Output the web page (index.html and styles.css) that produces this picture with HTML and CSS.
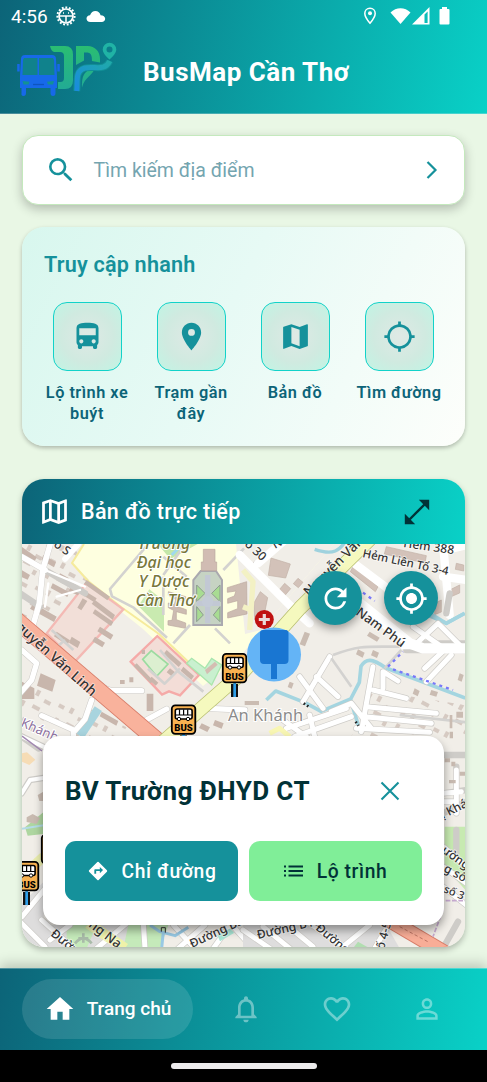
FILE: index.html
```html
<!DOCTYPE html>
<html lang="vi">
<head>
<meta charset="utf-8">
<meta name="viewport" content="width=device-width, initial-scale=1">
<title>BusMap Cần Thơ</title>
<link rel="stylesheet" href="styles.css">
</head>
<body>
<header class="top">
  <div class="status">
    <span class="clock">4:56</span>
    <svg class="st-gear" width="20" height="20" viewBox="0 0 20 20" fill="none" stroke="#fff"><circle cx="10" cy="10" r="8.600" stroke-width="2" stroke-dasharray="1.9 1.7"/><circle cx="10" cy="10" r="7" stroke-width="1.7"/><path d="M3.500 10h13M10 10v6" stroke-width="1.5"/><path d="M7 7h1M12 7h1" stroke-width="1.3"/></svg>
    <svg class="st-cloud" width="20" height="13" viewBox="0 0 20 13" fill="#fff"><path d="M4.500 12C1.900 12 .5 10.400.5 8.500S2 5.300 4 5.200C5 2.500 7 1 9.300 1c2.800 0 4.700 1.800 5.300 4.200 2.700 0 4.600 1.500 4.600 3.600 0 1.900-1.500 3.200-3.500 3.200z"/></svg>
    <span class="grow"></span>
    <svg class="st-pin" width="14" height="18" viewBox="0 0 14 18"><path d="M7 1.200c-3 0-5.200 2.200-5.200 5.200C1.800 10 7 16.200 7 16.200s5.200-6.200 5.200-9.800c0-3-2.200-5.200-5.200-5.200z" fill="none" stroke="#fff" stroke-width="1.5"/><circle cx="7" cy="6.300" r="2" fill="#fff"/></svg>
    <svg class="st-wifi" width="21" height="18" viewBox="0 0 21 18" fill="#fff"><path d="M.5 5.500C6-.2 15-.2 20.500 5.500L10.500 17z"/></svg>
    <svg class="st-cell" width="18" height="18" viewBox="0 0 18 18"><path d="M0 17.500 17.500 0v17.500z" fill="#fff"/><path d="M12.500 7.500 15.600 4.500v11.500h-3.100z" fill="#0abdb9"/></svg>
    <svg class="st-bat" width="11" height="18" viewBox="0 0 11 18" fill="#fff"><path d="M3 0h5v2h1.500q1 0 1 1v13.500q0 1-1 1h-8q-1 0-1-1V3q0-1 1-1H3z"/></svg>
  </div>
  <div class="brand">
    <svg class="logo" width="102" height="56" viewBox="0 0 102 56">
      <defs><linearGradient id="lg" x1="0" y1="0" x2="0" y2="1"><stop offset="0" stop-color="#2abd72"/><stop offset="1" stop-color="#22ab94"/></linearGradient>
      <linearGradient id="lb" x1="0" y1="1" x2="1" y2="0"><stop offset="0" stop-color="#198bdd"/><stop offset="1" stop-color="#20aaa9"/></linearGradient></defs>
      <path d="M33 4h15q8 0 8 8.500v26q0 8.500-8 8.500h-7v-7h2.500q3.500 0 3.500-4V14q0-4-4-4H37q-3-1-4-6z" fill="url(#lg)"/>
      <path d="M59 4h11.500C78 4 83 9.500 83 17v3.500l-8-1.500c0-6-1-8.500-6-8.500h-2v8l-8 4.500zM65 45.500c0-11 1-16.500 13-20-2 8-10 9-13 20z" fill="url(#lg)"/>
      <path d="M59.800 49c1-10-2-20 8-23 9-2.500 20 4 25-7" fill="none" stroke="#118f96" stroke-width="7"/>
      <path d="M59.800 49c1-10-2-20 8-23 9-2.500 20 4 25-7" fill="none" stroke="url(#lb)" stroke-width="5"/>
      <path fill-rule="evenodd" d="M92.500 .8a6.800 6.800 0 0 0-6.800 6.800c0 4.500 6.800 10 6.800 10s6.800-5.500 6.800-10A6.800 6.800 0 0 0 92.500 .8zm0 3.800a3 3 0 1 1 0 6 3 3 0 0 1 0-6z" fill="#20b3a5"/>
      <g fill="#1769e9"><path d="M8 13h27q4 0 4 4l1 17v12h-1.500v5q0 3-2.500 3t-2.500-3v-5H9v5q0 3-2.500 3T4.500 51v-5H3V34l1-17q0-4 4-4z"/><path d="M.2 22h2.500v7.500H.2zM40.300 22h2.500v7.500h-2.500z"/></g>
      <path d="M7 16h13.500v17H5.500l.5-15zM22 16h14l1 2 .5 15H22z" fill="#10828c"/>
      <path d="M5.500 39l7 .8-1 2.700H6.500zM37 39l-7 .8 1 2.700h5z" fill="#139193"/><path d="M16 42.500h11" stroke="#0e55bf" stroke-width="1.300"/>
    </svg>
    <h1>BusMap Cần Thơ</h1>
  </div>
</header>

<main>
  <div class="search">
    <svg class="s-icon" width="32" height="32" viewBox="0 0 24 24" fill="#15919b"><path d="M15.500 14h-.79l-.28-.27A6.470 6.470 0 0 0 16 9.500 6.500 6.500 0 1 0 9.500 16c1.610 0 3.090-.59 4.230-1.570l.27.28v.79l5 4.990L20.490 19zm-6 0C7.010 14 5 11.990 5 9.500S7.010 5 9.500 5 14 7.010 14 9.500 11.990 14 9.500 14z"/></svg>
    <span class="placeholder">Tìm kiếm địa điểm</span>
    <svg width="12" height="20" viewBox="0 0 12 20" fill="none" stroke="#15919b" stroke-width="2.200"><path d="M1.500 2l8 8-8 8"/></svg>
  </div>

  <section class="quick">
    <h2>Truy cập nhanh</h2>
    <div class="tiles">
      <div class="tile"><div class="box"><svg width="33" height="33" viewBox="0 0 24 24"><path d="M4 16c0 .88.39 1.670 1 2.220V20c0 .55.45 1 1 1h1c.55 0 1-.45 1-1v-1h8v1c0 .55.45 1 1 1h1c.55 0 1-.45 1-1v-1.780c.61-.55 1-1.340 1-2.220V6c0-3.500-3.580-4-8-4s-8 .5-8 4v10zm3.500 1c-.83 0-1.500-.67-1.500-1.500S6.670 14 7.500 14s1.500.67 1.500 1.500S8.330 17 7.500 17zm9 0c-.83 0-1.500-.67-1.500-1.500s.67-1.500 1.500-1.500 1.500.67 1.500 1.500-.67 1.500-1.500 1.500zm1.500-6H6V6h12v5z"/></svg></div><span>Lộ trình xe buýt</span></div>
      <div class="tile"><div class="box"><svg width="33" height="33" viewBox="0 0 24 24"><path d="M12 2C8.130 2 5 5.130 5 9c0 5.250 7 13 7 13s7-7.750 7-13c0-3.870-3.130-7-7-7zm0 9.500a2.500 2.500 0 0 1 0-5 2.500 2.500 0 0 1 0 5z"/></svg></div><span>Trạm gần đây</span></div>
      <div class="tile"><div class="box"><svg width="33" height="33" viewBox="0 0 24 24"><path d="M20.500 3l-.16.03L15 5.100 9 3 3.360 4.900c-.21.07-.36.25-.36.48V20.500c0 .28.22.5.5.5l.16-.03L9 18.900l6 2.100 5.640-1.900c.21-.07.36-.25.36-.48V3.500c0-.28-.22-.5-.5-.5zM15 19l-6-2.110V5l6 2.110V19z"/></svg></div><span>Bản đồ</span></div>
      <div class="tile"><div class="box"><svg width="33" height="33" viewBox="0 0 24 24"><path d="M20.940 11A8.994 8.994 0 0 0 13 3.060V1h-2v2.060A8.994 8.994 0 0 0 3.060 11H1v2h2.060A8.994 8.994 0 0 0 11 20.940V23h2v-2.060A8.994 8.994 0 0 0 20.940 13H23v-2h-2.060zM12 19c-3.870 0-7-3.130-7-7s3.130-7 7-7 7 3.130 7 7-3.130 7-7 7z"/></svg></div><span>Tìm đường</span></div>
    </div>
  </section>

  <section class="live">
    <div class="live-head">
      <svg width="33" height="33" viewBox="0 0 24 24" fill="#fff"><path d="M20.500 3l-.16.03L15 5.100 9 3 3.360 4.900c-.21.07-.36.25-.36.48V20.500c0 .28.22.5.5.5l.16-.03L9 18.900l6 2.100 5.640-1.900c.21-.07.36-.25.36-.48V3.500c0-.28-.22-.5-.5-.5zM10 5.470l4 1.400v11.660l-4-1.400V5.470zm-5 .99l3-1.010v11.700l-3 1.160V6.460zm14 11.080l-3 1.010V6.860l3-1.160v11.840z"/></svg>
      <h2>Bản đồ trực tiếp</h2>
      <svg width="26" height="26" viewBox="0 0 26 26"><path d="M14.800.8h10.400v10.400zM.8 14.800v10.400h10.400z" fill="#013237"/><path d="M5 21L21 5" stroke="#013237" stroke-width="2.400"/></svg>
    </div>
    <div class="map">
      <svg class="tiles-map" width="443" height="403" viewBox="22 544 443 403">
        <defs>
          <g id="stop"><path d="M9 32h7v13H9z" fill="#111"/><path d="M11.300 30h2.700v15h-2.700z" fill="#2f9fe8"/><rect x=".8" y="1.800" width="23.500" height="28.500" rx="3.500" fill="#f8b251" stroke="#000" stroke-width="1.800"/><rect x="4.300" y="5.500" width="16.800" height="10" rx="2" fill="#fff" stroke="#000" stroke-width="1.600"/><path d="M4 11.500h17M8.500 6v5M12.600 6v5M16.700 6v5" stroke="#000" stroke-width="1.200"/><circle cx="8" cy="15.500" r="1.700" fill="#fff" stroke="#000"/><circle cx="17" cy="15.500" r="1.700" fill="#fff" stroke="#000"/><text x="12.500" y="27.600" text-anchor="middle" class="bus">BUS</text></g>
          <pattern id="houses" width="38" height="31" patternUnits="userSpaceOnUse" patternTransform="rotate(28)"><path d="M3 4h6v4H3zM15 2h4v6h-4zM26 7h7v4h-7zM6 18h4v6H6zM18 17h8v4h-8zM31 22h4v5h-4z" fill="#d6cac2"/></pattern>
        </defs>
        <path d="M22 544h443v403H22z" fill="#f1eee8"/>
        <path d="M22 544h58l-6 18 16 18-28 44-40-8zM22 680l70 30 60 30H22zM370 690l95 15v35H350z" fill="url(#houses)"/>
        <!-- campus and hospital grounds -->
        <path d="M84 544h250l-73 86-21 27-37 29-60-57-35-28-35-38z" fill="#feffe0"/>
        <path d="M236 544h98l-73 86-16 4z" fill="#f1eee8"/>
        <path d="M84 544L72 563l16 18 33 26 38 27 40 38 13 13" class="l" stroke="#f6eb9b" stroke-width="2"/>
        <g transform="translate(20 470) scale(.33333)">
          <path d="M413 222h120l-82 45z" fill="#c3e7a8"/><path d="M355 408l33-50 44 35v92z" fill="#c9eab0"/>
          <path d="M455 255l30-30" class="l" stroke="#9fd9ed" stroke-width="9"/>
          <path d="M200 338L80 490 165 575l145-157z" fill="#f2dfd8" stroke="#f4b9b4" stroke-width="7"/>
          <g fill="#c8b6ac"><path d="M190 360l40 25-7 12-40-25zM188 385l14 8-18 28-12-8zM225 390l60 45-7 14-63-48zM225 418l55 38-7 12-55-38zM200 330l70 50-8 11-70-50zM40 400l70 40-8 16-72-40zM5 230l45 32-8 16-37-24zM70 255l38 22-6 15-38-22zM5 300l25 15-7 14-18-8zM240 470l40 25-8 14-40-25zM225 500l30 18-8 14-30-18zM110 485l40 26-8 14-40-26zM155 500l26 16-8 18-26-16z"/><path d="M98 340l50 27-6 14-50-27zM120 310l26 14-6 13-26-14zM152 350l28 12-6 14-28-12z"/></g>
          <path d="M5 260l70 40M90 225l-22 75-10 100L35 480M75 300l120 70M0 370l60 40" class="c"/><path d="M5 260l70 40M90 225l-22 75-10 100L35 480M175 222l-40 45" class="w" stroke-width="17"/><path d="M75 300l120 50M85 340l-10 70M110 380l70-20" class="w" stroke-width="7"/>
          <path d="M385 222l-115 135 6 22 65 34 100 90M430 320v115M500 320l-70-60M430 315l60-85M610 300l62-65" class="c2"/>
          <path d="M520 465V330l22-27h46l18 27v135z" fill="#c6d3c3" stroke="#aaa9af" stroke-width="6"/><g fill="#a8dc92" stroke="#8e9b91" stroke-width="3"><path d="M530 345l25 25-25 25zM600 345l-25 25 25 25zM530 410l20 25-20 20zM600 410l-20 25 20 20z"/></g><path d="M563 315v145M530 400h70" stroke="#c2c8d4" stroke-width="16"/><circle cx="563" cy="395" r="17" fill="#c4cbd7"/><path d="M550 238h35v38h5v26h-46v-26h6z" fill="#d1bcb3" stroke="#bba79e" stroke-width="2"/>
          <g fill="#cdbcb2" stroke="#bba79e" stroke-width="2"><path d="M445 365l52 15v12l-23-3-5 20 30 10v14l-30-8v24l28 10v16l-53-10v-13l12-1 5-30-16-8v-14l18 5 4-16-22-11zM680 335l-58 18v14l26-4-5 15-20 8v14l30-8v24l-30 12v16l58-12z"/></g>
        </g>
        <g transform="translate(20 600) scale(.33333)">
          <path d="M332 185L412 108 537 225 480 286 447 274 426 284z" fill="#f3ddd7" stroke="#f5aaa8" stroke-width="7"/>
          <path d="M368 178l26-26 50 40-34 37z" fill="#dcefd0" stroke="#9bdba0" stroke-width="5"/><g fill="#c8b6ac"><path d="M440 150l45 40-9 11-45-40zM350 190l50 52-8 8-51-52zM450 205l15 12-10 12-15-12zM490 200l32 28-8 12-32-28zM365 150h10v12h-10zM395 230l20 18-8 9-20-18zM380 281h20v52h-20zM62 220l45 20-10 35-46-18zM300 240h14v12h-14zM328 232h12v15h-12zM245 335l50 28-6 14-50-28zM5 245l38 20v32H5zM545 370l25 12-8 14-25-12zM585 360l26 10-6 16-26-10z"/></g>
          <path d="M420 150l55 65 75 60M480 205l-46 46-50-45M95 90l65 60M100 150l35-30M460 130l50-55M585 85l45 45" class="c2"/>
          <path d="M500 190l15-15 40 30 20-30 30 20-30 60z" fill="#c9f0cf" stroke="#a9e6ae" stroke-width="4"/><path d="M555 210l30-25 8 9-32 29z" fill="#d4bdb2"/>
          <path d="M180 408l55-82" class="l" stroke="#a8d4de" stroke-width="26"/>
          <path d="M245 262l30 10h90M370 365l70-38M215 300l-20 58-30 34-100-45M160 395v40M560 325l115 5M5 150l45 40-15 50-35 40M5 410l50 35" class="c"/><path d="M245 262l30 10h90M370 365l70-38M215 300l-20 58-30 34-100-45M160 395v40M560 325l115 5M5 150l45 40-15 50-35 40" class="w" stroke-width="16"/>
        </g>
        <!-- eastern quarter -->
        <g transform="translate(243 470) scale(.33333)">
          <g fill="#d3c2b9" stroke="#c1b0a6" stroke-width="2"><path d="M84 264l58 18-14 42-52-8zM125 340l18 16-17 20-17-17zM165 325l15 12-14 16-15-12zM32 400l20-35 22 18-14 70-25-5zM430 230l120 27-4 22-122-27zM330 290l75 60-8 15-75-60zM575 400l20-10v36l-20 8zM640 280l22 5v18l-25-5zM620 360l30-15v24l-28 12z"/></g>
          <path d="M-10 255L150 415 200 460M40 280L110 222M320 270L440 360 490 450M600 222L620 435M600 320l70 10" class="c"/><path d="M-10 255L150 415 200 460M45 280L120 215M320 270L440 360M600 222L620 435M600 320l70 10M610 240l60-15" class="w" stroke-width="25"/>
          <path d="M215 238c60 20 75 0 90-20M540 430l70 30 55-30" class="l" stroke="#9fd2de" stroke-width="10"/>
          <path d="M0 300l30 35-10 145M0 410l25 10" class="l" stroke="#f3f1c4" stroke-width="16"/>
          <path d="M360 368l35 25" class="dots"/>
        </g>
        <g transform="translate(243 600) scale(.33333)">
          <path d="M70 300l28-27 88 35 48 26 89-37 26-50 5-48c15-24 32-25 75 5l238 90M323 300l30 100M560 40l50 30 55-30" class="l" stroke="#a4d5e0" stroke-width="11"/>
          <path d="M180 305l80-135M170 230l70 95M220 230l65 60M265 335l60-25 60 75M130 385l180-60M155 410l170-60M120 360l90 65M200 345l15 65M390 200L355 395M390 270l100 25M370 320l210 20M365 350l200 20M340 385l220 12M420 265v-50l45 28M480 130h190M490 150h180M510 140l75-70M510 80l85 60M590 75l60 60M545 205l70-65M550 245l75-80M610 40l10-60" class="c"/>
          <path d="M180 305l80-135M170 230l70 95M220 230l65 60M265 335l60-25 60 75M130 385l180-60M155 410l170-60M120 360l90 65M200 345l15 65M390 200L355 395M390 270l100 25M370 320l210 20M365 350l200 20M340 385l220 12M420 265v-50l45 28M480 140h190M510 140l75-70M510 80l85 60M590 75l60 60M545 205l70-65M550 245l75-80" class="w" stroke-width="15"/>
          <path d="M350 10L500 130l40 15h130" class="c" stroke-width="36"/><path d="M350 10L500 130l40 15h130" class="w" stroke-width="31"/>
          <path d="M270 165c80-30 100-25 200-25M265 175l60 85M425 205l50-55M470 345l200 22" class="c2"/>
          <path d="M435 200l45-45M450 208l180 62" class="dots"/>
          <path d="M182 310l18 12M338 365l8 12" stroke="#222" stroke-width="8" stroke-dasharray="5 7"/>
          <g fill="#cabcb2"><path d="M185 95l16 6-15 38-16-6zM380 95l30 18-8 12-30-18zM345 148l20 10-6 15-20-10zM390 150l18 8-6 16-18-8zM515 265l15 8-6 16-15-8zM565 270l20 6-5 14-20-6zM650 220l12 5-6 20-12-5zM5 303h43v12H5zM620 345h8v40h-8zM640 335h20v18h-20zM140 245l12 5-6 16-12-5z"/></g>
          <path d="M80 400l30-15 30 25" class="l" stroke="#f8f6b3" stroke-width="15"/>
        </g>
        <!-- trunk roads -->
        <path d="M8 613l152 130" class="l" stroke="#d77c68" stroke-width="17.500"/><path d="M8 613l152 130" class="l" stroke="#f9b29c" stroke-width="16"/>
        <path d="M155 749l88-77 57-64 72-71" class="l" stroke="#b8be70" stroke-width="14.500"/><path d="M155 749l88-77 57-64 72-71" class="l" stroke="#f5f9be" stroke-width="13"/>
        <!-- lower strips around the stop card -->
        <g transform="translate(0 730) scale(.33333)">
          <path d="M66 70l15-3 25 22-18 16-22-10z" fill="#f6dcb5"/><path d="M65 190l25-40 45-7M66 20l75 35" class="c"/><path d="M65 190l25-40 45-7M66 20l75 35" class="w" stroke-width="12"/>
          <path d="M75 292l55-45v65l-47 5z" fill="#aed6a0"/><path d="M66 296l65-10" class="l" stroke="#b3dbe6" stroke-width="6"/><path d="M80 262l18-10 22 12-10 18-30-6zM113 195l17-10v28h-12z" fill="#c8bab0"/>
          <path d="M66 440l65-60" class="l" stroke="#e9ecad" stroke-width="30"/><path d="M66 520l65-65v130h265v70H66z" fill="#dedddd"/>
          <path d="M200 585h90l-30 70h-60zM385 585h120l-25 70H370z" fill="#c5eaba"/>
          <path d="M66 560l70-85M60 575l75 75M125 570l100 90M150 630l60-45M290 655l90-75M430 580l5 75M520 585l60 65M535 655l80-70M640 655l50-70M700 590l50 55" class="c"/><path d="M66 560l70-85M60 575l75 75M125 570l100 90M150 630l60-45M290 655l90-75M430 580l5 75M520 585l60 65M535 655l80-70M640 655l50-70M700 590l50 55" class="w" stroke-width="15"/>
          <path d="M265 580l110 75" class="l" stroke="#eef2a9" stroke-width="32"/>
          <path d="M250 610v28M235 625h30M225 640q25-30 50 0" class="l" stroke="#a9bba9" stroke-width="8"/><path d="M450 585l30 20 45 12 40-25M490 605l-5 50" class="l" stroke="#98c9e4" stroke-width="9"/><path d="M652 615l40-20 10 14-42 25z" fill="#a8e6d5"/><path d="M484 605v-12h12v15" class="l" stroke="#333" stroke-width="3"/>
        </g>
        <g transform="translate(243 730) scale(.33333)">
          <path d="M605 290h62v190l-62-70z" fill="#c7eab1"/><path d="M0 585h430l40 70H0z" fill="#dedddd"/>
          <path d="M600 75h70M600 190l70-10M600 215h30M640 110v140M600 250l70-35M640 300v70M600 350l70 60M600 410l70 50M600 470l70 55M0 600l80 55M60 590l80 65M150 600l60 50M200 580l110 75M300 650l80-65M440 580l-45 75M600 655l45-80" class="c"/>
          <path d="M600 190l55-5M600 215h30M640 120v130M600 350l70 60M600 410l70 50M600 470l70 55M0 600l80 55M60 590l80 65M150 600l60 50M200 580l110 75M300 650l80-65M440 580l-45 75" class="w" stroke-width="15"/>
          <path d="M435 568l170 100" class="l" stroke="#d77c68" stroke-width="47"/><path d="M435 568l170 100" class="l" stroke="#f8ad97" stroke-width="41"/><path d="M470 590l90 48" class="l" stroke="#a05848" stroke-width="2" stroke-dasharray="10 7"/>
          <path d="M345 635l35 20h-50z" fill="#b1deb0"/><path d="M620 5h10v20h-10zM605 85h16v12h-16zM625 95h12v14h-12zM650 125h16v12h-16zM618 150h20v10h-20z" fill="#c8bab0"/><path d="M608 512h60M600 540l-30 80" class="l" stroke="#c6a9cf" stroke-width="5" stroke-dasharray="14 5"/>
        </g>
        <g class="uni"><text x="164" y="549">Trường</text><text x="164" y="568">Đại học</text><text x="164" y="587">Y Dược</text><text x="165" y="606">Cần Thơ</text></g>
        <g class="road">
          <text transform="translate(15 628) rotate(42)" font-size="14">guyễn Văn Linh</text><text transform="translate(309 597) rotate(-45)" font-size="13.500">Nguyễn Văn</text>
          <text transform="translate(53 546) rotate(35)">o S</text><text transform="translate(244 545) rotate(43)">o 30</text><text transform="translate(275 549) rotate(-30)">N</text>
          <text transform="translate(403 547) rotate(8)">Hẻm 388</text><text transform="translate(362 557) rotate(12)" font-size="11.500">Hẻm Liên Tổ 3-4</text><text transform="translate(355 614) rotate(36)" font-size="13">Nam Phú</text>
          <text transform="translate(50 935) rotate(39)">Đường</text><text transform="translate(88 926) rotate(38)" font-size="13">ng Na</text><text transform="translate(192 948) rotate(-25)">Đường B2...</text>
          <text transform="translate(258 939) rotate(-13)">Đường B10</text><text transform="translate(315 929) rotate(40)">Đường</text><text transform="translate(384 950) rotate(-75)">ố 4-5</text>
          <text transform="translate(443 819) rotate(-27)">ị Khái</text><text transform="translate(441 852) rotate(35)">ường s</text><text transform="translate(443 871) rotate(28)">g số 4</text><text transform="translate(443 892) rotate(22)" font-size="11">số 3</text>
        </g>
        <text transform="translate(20 726) rotate(24)" class="area purple">Khánh</text><path d="M22 736l20 15" stroke="#a187b1" stroke-width="1.500"/>
        <text x="228" y="721" class="area">An Khánh</text>
        <circle cx="264.300" cy="619.500" r="9.500" fill="#bf1111"/><path d="M264.300 614v11M258.800 619.500h11" stroke="#eadada" stroke-width="3.200"/>
        <use href="#stop" x="222" y="652"/><use href="#stop" x="171" y="703.500"/><use href="#stop" x="41" y="833"/><use href="#stop" x="14" y="860"/>
        <circle cx="274" cy="654.500" r="27" fill="#64b4f6"/><path d="M263 630h23q2.500 0 2.500 4v26q0 4-4 4h-7.500v15h-6V664h-7q-4 0-4-4v-27q0-3 3-3z" fill="#1976d2"/>
      </svg>
      <div class="fabs">
        <div class="fab"><svg width="33" height="33" viewBox="0 0 24 24"><path d="M17.650 6.350A7.958 7.958 0 0 0 12 4c-4.420 0-7.990 3.580-7.990 8s3.570 8 7.990 8c3.730 0 6.840-2.550 7.730-6h-2.080A5.990 5.990 0 0 1 12 18c-3.310 0-6-2.690-6-6s2.690-6 6-6c1.660 0 3.140.69 4.220 1.780L13 11h7V4l-2.350 2.350z"/></svg></div>
        <div class="fab"><svg width="33" height="33" viewBox="0 0 24 24"><path d="M12 8c-2.210 0-4 1.790-4 4s1.790 4 4 4 4-1.790 4-4-1.790-4-4-4zm8.940 3A8.994 8.994 0 0 0 13 3.060V1h-2v2.060A8.994 8.994 0 0 0 3.060 11H1v2h2.060A8.994 8.994 0 0 0 11 20.940V23h2v-2.060A8.994 8.994 0 0 0 20.940 13H23v-2h-2.060zM12 19c-3.870 0-7-3.130-7-7s3.130-7 7-7 7 3.130 7 7-3.130 7-7 7z"/></svg></div>
      </div>
      <div class="stop-card">
        <div class="stop-title"><h3>BV Trường ĐHYD CT</h3><svg width="20" height="20" viewBox="0 0 20 20" stroke="#15919b" stroke-width="2.100"><path d="M1.500 1.500l17 17M18.500 1.500l-17 17"/></svg></div>
        <div class="actions">
          <div class="btn go"><svg width="22" height="22" viewBox="0 0 24 24" fill="#fff"><path d="M21.710 11.290l-9-9a.996.996 0 0 0-1.410 0l-9 9a.996.996 0 0 0 0 1.410l9 9c.39.39 1.020.39 1.410 0l9-9a.996.996 0 0 0 0-1.410zM14 14.500V12h-4v3H8v-4c0-.55.45-1 1-1h5V7.500l3.500 3.500-3.500 3.500z"/></svg><span>Chỉ đường</span></div>
          <div class="btn list"><svg width="20" height="12" viewBox="0 0 20 12" fill="#013237"><path d="M0 .5h2v2H0zM4.500.5H19v2H4.500zM0 5h2v2H0zM4.500 5H19v2H4.500zM0 9.500h2v2H0zM4.500 9.500H19v2H4.500z"/></svg><span>Lộ trình</span></div>
        </div>
      </div>
    </div>
  </section>
</main>

<nav class="tabs">
  <div class="tab active"><svg width="32" height="32" viewBox="0 0 24 24"><path d="M10 20v-6h4v6h5v-8h3L12 3 2 12h3v8z"/></svg><span>Trang chủ</span></div>
  <div class="tab"><svg width="32" height="32" viewBox="0 0 24 24"><path d="M12 22c1.100 0 2-.9 2-2h-4c0 1.100.9 2 2 2zm6-6v-5c0-3.070-1.630-5.640-4.500-6.320V4c0-.83-.67-1.500-1.500-1.500s-1.500.67-1.500 1.500v.68C7.640 5.360 6 7.920 6 11v5l-2 2v1h16v-1l-2-2zm-2 1H8v-6c0-2.480 1.510-4.500 4-4.500s4 2.020 4 4.500v6z"/></svg></div>
  <div class="tab"><svg width="32" height="32" viewBox="0 0 24 24"><path d="M16.500 3c-1.740 0-3.410.81-4.500 2.090C10.910 3.810 9.240 3 7.500 3 4.420 3 2 5.420 2 8.500c0 3.780 3.400 6.860 8.550 11.540L12 21.350l1.450-1.320C18.600 15.360 22 12.280 22 8.500 22 5.420 19.580 3 16.500 3zm-4.400 15.550l-.1.1-.1-.1C7.140 14.240 4 11.390 4 8.500 4 6.500 5.500 5 7.500 5c1.540 0 3.040.99 3.570 2.360h1.870C13.460 5.990 14.960 5 16.500 5c2 0 3.500 1.500 3.500 3.500 0 2.890-3.140 5.740-7.900 10.050z"/></svg></div>
  <div class="tab"><svg width="32" height="32" viewBox="0 0 24 24"><path d="M12 5.900a2.100 2.100 0 1 1 0 4.200 2.100 2.100 0 0 1 0-4.200m0 9c2.970 0 6.100 1.460 6.100 2.100v1.100H5.900V17c0-.64 3.130-2.100 6.100-2.100M12 4C9.790 4 8 5.790 8 8s1.790 4 4 4 4-1.790 4-4-1.790-4-4-4zm0 9c-2.670 0-8 1.340-8 4v3h16v-3c0-2.660-5.330-4-8-4z"/></svg></div>
</nav>
<div class="gesture"><div class="pill"></div></div>
</body>
</html>
```
FILE: styles.css
```css
* { box-sizing: border-box; }
body { margin: 0; width: 487px; height: 1082px; overflow: hidden; display: flex; flex-direction: column; background: #e9f7e5; font-family: Roboto, "Noto Sans", sans-serif; }
h1, h2, h3 { margin: 0; }
svg { display: block; flex: none; }

.top { height: 114px; flex: none; background: linear-gradient(103.200deg, #0c6478, #09d1c7); color: #fff; border-bottom: 1px solid rgba(255,255,255,.25); }
.status { display: flex; align-items: center; height: 32px; padding: 0 37px 0 11px; }
.clock { font-size: 19px; line-height: 32px; width: 45px; padding-top: 2px; }
.st-cloud { margin-left: 10px; }
.grow { flex: 1; }
.st-wifi { margin-left: 13px; }
.st-cell { margin-left: 1px; }
.st-bat { margin-left: 9px; }
.brand { display: flex; align-items: center; height: 80px; padding: 0 17px; }
.logo { margin-top: -5px; }
.brand h1 { margin-left: 24px; font-size: 26px; line-height: 32px; font-weight: 700; letter-spacing: .5px; }

main { flex: none; height: 854px; padding: 21px 22px; }
.search { display: flex; align-items: center; height: 70px; padding: 0 26px 0 22px; background: #fff; border: 1.500px solid #c4e9bd; border-radius: 16px; box-shadow: 0 4px 11px rgba(0,0,0,.24); }
.placeholder { flex: 1; margin-left: 16.500px; font-size: 19.500px; color: #74a5b0; }

.quick { margin-top: 22px; height: 219px; padding: 22px 13px; border-radius: 22px; background: linear-gradient(116.300deg, #d8f7ee, #e7faf5 45%, #fdfefb); box-shadow: 0 2px 4px rgba(0,0,0,.26); }
.quick h2 { margin-left: 9px; font-size: 21.600px; line-height: 32px; font-weight: 600; letter-spacing: .2px; color: #15919b; }
.tiles { display: grid; grid-template-columns: repeat(4, 104px); margin-top: 21px; }
.tile { display: flex; flex-direction: column; align-items: center; gap: 11px; text-align: center; font-size: 16.300px; line-height: 21px; font-weight: 600; letter-spacing: .5px; color: #0c6478; }
.tile span { width: 92px; }
.box { width: 69px; height: 69px; display: grid; place-items: center; border: 1.500px solid #12d2c9; border-radius: 14px; background: radial-gradient(circle, #dfe9e5 0, #d0eae0 55%, #c0f5e4 100%); }
.box svg { fill: #15919b; }

.live { margin-top: 33px; height: 468px; border-radius: 22px; overflow: hidden; box-shadow: 0 3px 6px rgba(0,0,0,.26); }
.live-head { display: flex; align-items: center; height: 65px; padding: 0 35px 0 16px; background: linear-gradient(98.300deg, #0c6478, #09d1c7); color: #fff; }
.live-head h2 { flex: 1; margin-left: 10px; font-size: 21.500px; line-height: 30px; font-weight: 500; letter-spacing: .35px; }
.map { display: grid; height: 403px; }
.map > * { grid-area: 1 / 1; }
.fabs { z-index: 1; display: flex; justify-content: flex-end; gap: 22px; padding: 27px 27px 0; }
.fab { width: 54px; height: 54px; border-radius: 50%; display: grid; place-items: center; background: #15919b; box-shadow: 0 4px 8px rgba(0,0,0,.35); }
.fab svg { fill: #fff; }
.stop-card { z-index: 1; align-self: end; height: 189px; margin: 0 21px 22px; padding: 22px; background: #fff; border-radius: 17px; box-shadow: 0 5px 10px rgba(0,0,0,.38); }
.stop-title { display: flex; align-items: center; justify-content: space-between; height: 65px; padding-right: 22px; }
.stop-title h3 { font-size: 26px; font-weight: 700; letter-spacing: .4px; color: #013237; }
.actions { display: flex; gap: 11px; margin-top: 18px; }
.btn { flex: 1; height: 60px; border-radius: 11px; display: flex; align-items: center; justify-content: center; font-size: 19.300px; font-weight: 500; letter-spacing: .6px; }
.go { gap: 13px; background: #15919b; color: #fff; }
.list { gap: 13px; background: #80ee98; color: #013237; }

.l { fill: none; stroke-linejoin: round; }
.w { fill: none; stroke: #fff; stroke-linecap: round; stroke-linejoin: round; }
.c { fill: none; stroke: #ceccc8; stroke-width: 19; stroke-linecap: round; stroke-linejoin: round; }
.c2 { fill: none; stroke: #d3d2d0; stroke-width: 8; stroke-linejoin: round; }
.dots { fill: none; stroke: #7878fa; stroke-width: 7; stroke-dasharray: 9 12; }
.tiles-map text { font-family: "Noto Sans", sans-serif; }
.uni text { font-size: 16px; font-style: italic; font-weight: 500; fill: #78783a; text-anchor: middle; stroke: #fff; stroke-width: 2; paint-order: stroke; }
.road { font-size: 12px; font-weight: 500; fill: #333; stroke: #fff; stroke-opacity: .5; stroke-width: 2; paint-order: stroke; }
.tiles-map .area { font-size: 16.500px; fill: #8b8b8b; stroke: #fff; stroke-width: 2; paint-order: stroke; }
.tiles-map .purple { font-size: 13px; fill: #8d72a0; }
.tiles-map .bus { font: 900 9.500px Roboto, sans-serif; }

.tabs { flex: none; height: 82px; display: flex; align-items: center; padding: 0 14px 2px 22px; background: linear-gradient(99.600deg, #0c6478, #09d1c7); border-top: 1px solid rgba(255,255,255,.28); box-shadow: 0 -4px 12px rgba(0,0,0,.2); }
.tab { flex: none; width: 90.700px; display: flex; align-items: center; justify-content: center; }
.tab svg { fill: #fff; opacity: .4; }
.tab.active { width: 171px; height: 60px; margin-right: 7.500px; gap: 11px; border-radius: 30px; background: rgba(255,255,255,.12); color: #fff; font-size: 19px; font-weight: 500; }
.tab.active svg { opacity: 1; }
.gesture { flex: 1; background: #000; padding-top: 13px; }
.pill { width: 146px; height: 6px; margin: 0 auto; border-radius: 3px; background: #ecebec; }
```
